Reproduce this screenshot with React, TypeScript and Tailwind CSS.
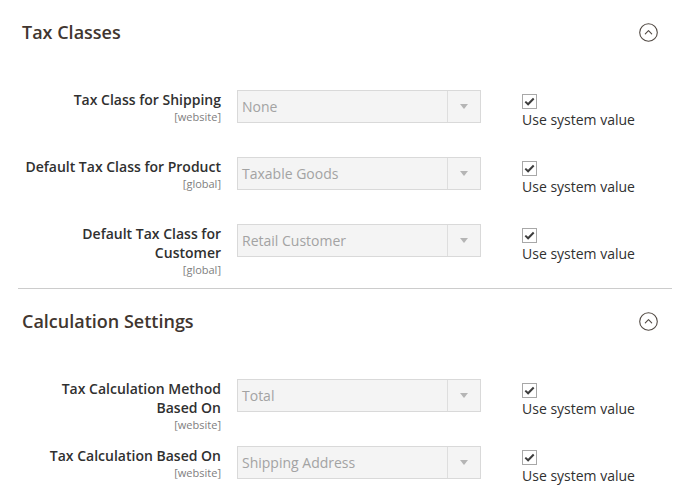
import React from 'react';

type Field = { label: string[]; scope: string; value: string };

const taxClasses: Field[] = [
  { label: ['Tax Class for Shipping'], scope: '[website]', value: 'None' },
  { label: ['Default Tax Class for Product'], scope: '[global]', value: 'Taxable Goods' },
  { label: ['Default Tax Class for', 'Customer'], scope: '[global]', value: 'Retail Customer' },
];

const calculation: Field[] = [
  { label: ['Tax Calculation Method', 'Based On'], scope: '[website]', value: 'Total' },
  { label: ['Tax Calculation Based On'], scope: '[website]', value: 'Shipping Address' },
];

function CollapseIcon() {
  return (
    <svg width="19" height="19" viewBox="0 0 19 19" fill="none" stroke="#514943" strokeWidth="1.1">
      <circle cx="9.5" cy="9.5" r="8.8" />
      <path d="M6.3 10.8 L9.5 7.6 L12.7 10.8" strokeLinecap="round" strokeLinejoin="round" />
    </svg>
  );
}

function SectionHeader({ title }: { title: string }) {
  return (
    <div className="flex items-center justify-between pl-[22px] pr-[37px] h-[24px]">
      <h2 className="text-[18px] leading-[24px] font-semibold text-[#41362f]">{title}</h2>
      <CollapseIcon />
    </div>
  );
}

function FieldRow({ field, height }: { field: Field; height: string }) {
  return (
    <div className={`flex items-start ${height}`}>
      <div className="w-[221px] pt-[1px] text-right">
        {field.label.map(line => (
          <div key={line} className="text-[14px] leading-[19px] font-semibold text-[#303030] whitespace-nowrap">
            {line}
          </div>
        ))}
        <div className="text-[11px] leading-[15px] text-[#808080]">{field.scope}</div>
      </div>
      <div className="ml-[16px] mt-[1px] w-[244px] h-[33px] flex border border-[#d9d9d9] bg-[#f4f4f4]">
        <div className="flex-1 flex items-center pl-[4px] text-[14px] text-[#a3a3a3]">{field.value}</div>
        <div className="w-[33px] flex items-center justify-center border-l border-[#dedede]">
          <svg width="8" height="5" viewBox="0 0 8 5">
            <path d="M0 0 H8 L4 5 Z" fill="#b5b5b5" />
          </svg>
        </div>
      </div>
      <div className="ml-[41px] pt-[5px]">
        <div className="w-[15px] h-[15px] border border-[#a8a8a8] bg-white flex items-center justify-center">
          <svg width="11" height="9" viewBox="0 0 11 9" fill="none">
            <path d="M1.3 4.6 L4.1 7.3 L9.7 1.5" stroke="#3d3d3d" strokeWidth="2" />
          </svg>
        </div>
        <div className="mt-[1px] text-[14px] leading-[19px] text-[#303030]">Use system value</div>
      </div>
    </div>
  );
}

export default function App() {
  return (
    <div className="w-[695px] h-[499px] overflow-hidden bg-white pt-[20px]" style={{ fontFamily: '"Open Sans", "Liberation Sans", sans-serif' }}>
      <SectionHeader title="Tax Classes" />
      <div className="mt-[45px]">
        {taxClasses.map((f, i) => (
          <FieldRow key={f.scope + i} field={f} height={i === taxClasses.length - 1 ? 'h-[65px]' : 'h-[67px]'} />
        ))}
      </div>
      <div className="ml-[18px] mr-[23px] border-t border-[#cccccc]" />
      <div className="mt-[20px]">
        <SectionHeader title="Calculation Settings" />
      </div>
      <div className="mt-[45px]">
        {calculation.map((f, i) => (
          <FieldRow key={f.scope + i} field={f} height="h-[67px]" />
        ))}
      </div>
    </div>
  );
}
